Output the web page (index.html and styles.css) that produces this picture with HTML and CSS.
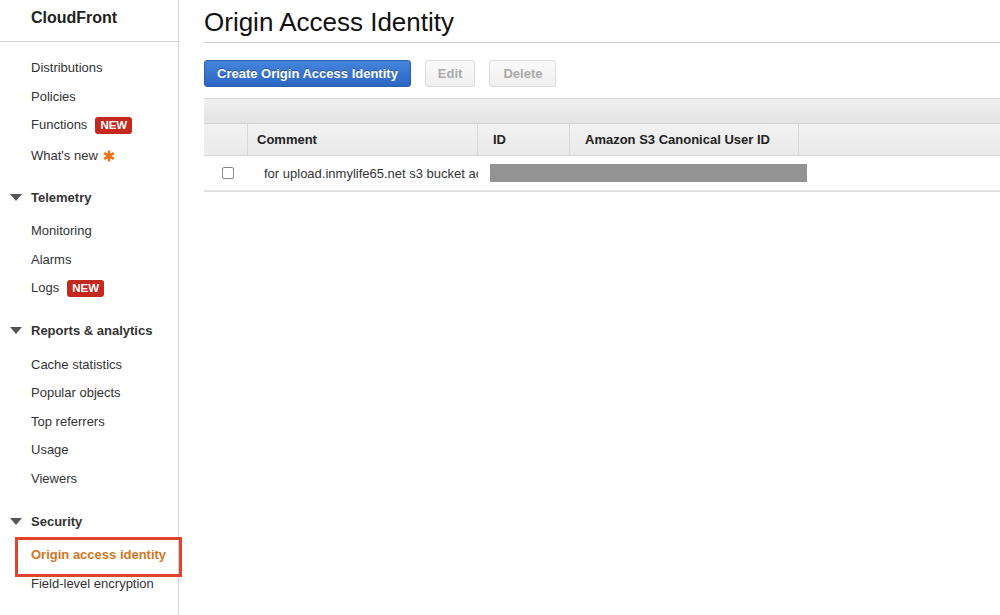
FILE: index.html
```html
<!DOCTYPE html>
<html lang="en">
<head>
  <meta charset="UTF-8">
  <title>CloudFront - Origin Access Identity</title>
  <link rel="stylesheet" href="styles.css">
</head>
<body>
  <aside class="sidebar">
    <div class="brand">CloudFront</div>
    <ul class="nav">
      <li>Distributions</li>
      <li>Policies</li>
      <li>Functions <span class="badge">NEW</span></li>
      <li class="whats-new">What's new
        <svg class="star" width="12" height="12" viewBox="0 0 12 12">
          <g stroke="#ec7211" stroke-width="2.6" stroke-linecap="butt">
            <line x1="6" y1="0.5" x2="6" y2="11.5"/>
            <line x1="1.2" y1="3.2" x2="10.8" y2="8.8"/>
            <line x1="1.2" y1="8.8" x2="10.8" y2="3.2"/>
          </g>
        </svg>
      </li>
    </ul>

    <div class="section"><span class="caret"></span>Telemetry</div>
    <ul class="nav">
      <li>Monitoring</li>
      <li>Alarms</li>
      <li>Logs <span class="badge">NEW</span></li>
    </ul>

    <div class="section"><span class="caret"></span>Reports &amp; analytics</div>
    <ul class="nav">
      <li>Cache statistics</li>
      <li>Popular objects</li>
      <li>Top referrers</li>
      <li>Usage</li>
      <li>Viewers</li>
    </ul>

    <div class="section"><span class="caret"></span>Security</div>
    <ul class="nav">
      <li class="active">Origin access identity</li>
      <li>Field-level encryption</li>
    </ul>
  </aside>

  <main class="content">
    <h1 class="title">Origin Access Identity</h1>

    <div class="toolbar">
      <button class="btn primary">Create Origin Access Identity</button>
      <button class="btn" disabled>Edit</button>
      <button class="btn wide" disabled>Delete</button>
    </div>

    <div class="grid">
      <div class="band"></div>
      <div class="head"></div>
      <div class="head">Comment</div>
      <div class="head id">ID</div>
      <div class="head id">Amazon S3 Canonical User ID</div>
      <div class="head last"></div>

      <div class="cell check"><span class="box"></span></div>
      <div class="cell comment">for upload.inmylife65.net s3 bucket access</div>
      <div class="cell redacted-cell"><span class="redacted"></span></div>
      <div class="cell"></div>
    </div>
  </main>
</body>
</html>
```

FILE: styles.css
```css
* {
  box-sizing: border-box;
}
body {
  margin: 0;
  display: flex;
  min-height: 100vh;
  font-family: "Liberation Sans", Arial, Helvetica, sans-serif;
  font-size: 13px;
  color: #333;
  background: #fff;
}

/* sidebar */
.sidebar {
  width: 179px;
  flex-shrink: 0;
  border-right: 1px solid #d5d5d5;
}
.brand {
  height: 42px;
  padding: 9px 0 0 31px;
  font-size: 16px;
  font-weight: bold;
  color: #222;
  border-bottom: 1px solid #d5d5d5;
}
.nav {
  list-style: none;
  margin: 0;
  padding: 0;
}
.brand + .nav {
  margin-top: 12px;
}
.nav li {
  height: 28.5px;
  line-height: 28.5px;
  padding-left: 31px;
  display: flex;
  align-items: center;
  gap: 8px;
  position: relative;
}
.nav li.whats-new {
  margin-top: 2px;
  gap: 5px;
}
.badge {
  background: #c5281f;
  color: #fff;
  font-size: 11.5px;
  font-weight: bold;
  line-height: 17px;
  padding: 0 5px;
  border-radius: 3px;
}
.section {
  height: 28px;
  margin: 14px 0 6px;
  display: flex;
  align-items: center;
  font-weight: bold;
  color: #333;
}
.brand + .nav + .section {
  margin-top: 13px;
}
.caret {
  width: 0;
  height: 0;
  margin: 0 9px 0 10px;
  border-left: 6.5px solid transparent;
  border-right: 6.5px solid transparent;
  border-top: 7px solid #555;
}
.nav li.active {
  color: #d0761f;
  font-weight: bold;
}
.nav li.active::after {
  content: "";
  position: absolute;
  left: 15px;
  right: -4px;
  top: -4px;
  bottom: -7px;
  border: 3px solid #e2432c;
}

/* main */
.content {
  flex: 1;
  padding-left: 25px;
  min-width: 0;
}
.title {
  margin: 0;
  height: 43px;
  padding-top: 7px;
  font-size: 26px;
  font-weight: normal;
  color: #111;
  border-bottom: 1px solid #d0d0d0;
}
.toolbar {
  display: flex;
  gap: 14px;
  margin-top: 17px;
}
.btn {
  height: 27px;
  padding: 0 12px;
  font-family: inherit;
  font-size: 13px;
  font-weight: bold;
  border-radius: 3px;
  border: 1px solid #ddd;
  background: linear-gradient(#fafafa, #efefef);
  color: #aaa;
}
.btn.wide {
  padding: 0 13px;
}
.btn.primary {
  padding: 0 12px;
  background: linear-gradient(#4584dc, #2b66c3);
  border-color: #2a5ea8;
  color: #fff;
  text-shadow: 0 -1px 0 rgba(0, 0, 0, 0.3);
}

/* table */
.grid {
  margin-top: 11px;
  display: grid;
  grid-template-columns: 44px 230px 92px 229px 1fr;
  border-bottom: 2px solid #e2e2e2;
}
.band {
  grid-column: 1 / -1;
  height: 26px;
  background: linear-gradient(#f0f0f0, #e3e3e3);
  border-top: 1px solid #d6d6d6;
  border-bottom: 1px solid #d2d2d2;
}
.head {
  height: 32px;
  display: flex;
  align-items: center;
  padding-left: 9px;
  font-weight: bold;
  color: #222;
  background: linear-gradient(#f2f2f2, #e9e9e9);
  border-right: 1px solid #d8d8d8;
  border-bottom: 1px solid #d8d8d8;
}
.head.id {
  padding-left: 15px;
}
.head.last {
  border-right: none;
}
.cell {
  height: 34px;
  display: flex;
  align-items: center;
}
.check {
  padding-left: 18px;
}
.box {
  width: 12px;
  height: 12px;
  border: 1px solid #8a8a8a;
  border-radius: 2px;
  background: #fff;
}
.comment {
  padding-left: 16px;
  white-space: nowrap;
  overflow: hidden;
  color: #333;
}
.redacted-cell {
  grid-column: 3 / 5;
}
.redacted {
  flex-shrink: 0;
  margin-left: 12px;
  width: 317px;
  height: 18px;
  background: #939393;
}
```
